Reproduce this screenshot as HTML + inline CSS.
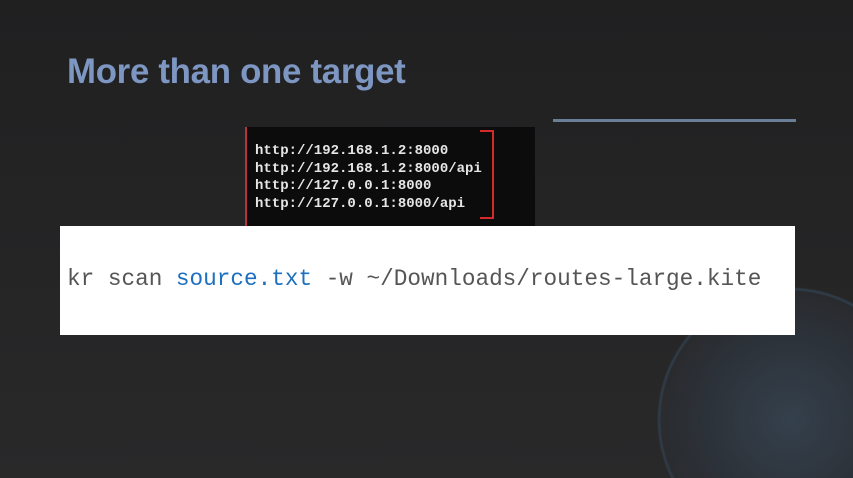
<!DOCTYPE html>
<html><head><style>
html,body{margin:0;width:853px;height:478px;overflow:hidden}
body{background:#262627;position:relative;font-family:"Liberation Sans",sans-serif}
.bg{position:absolute;left:0;top:0;width:853px;height:478px;background:radial-gradient(circle at 790px 420px,#34404c 0,#2c3138 90px,rgba(44,49,56,0.4) 129px,#2f3a45 130px,#2f3a45 131.5px,rgba(38,38,39,0) 133px),linear-gradient(#202021,#29292a)}
h1{position:absolute;left:67px;top:52px;margin:0;font-size:35px;font-weight:bold;color:#7d96c2;letter-spacing:-0.3px;transform:scaleX(0.995);transform-origin:left}
.line{position:absolute;left:553px;top:119px;width:243px;height:3px;background:#6b7e98}
.term{position:absolute;left:245px;top:127px;width:290px;height:99px;background:#0c0c0d;border-left:2px solid #b8323a;box-sizing:border-box}
.term pre{margin:0;position:absolute;left:8px;top:16px;font:bold 14px/17.7px "Liberation Mono",monospace;color:#e6e6e6}
.br{position:absolute;left:480px;top:130px;width:12px;height:85px;border:2px solid #d42a2a;border-left:none}
.cmd{position:absolute;left:60px;top:226px;width:735px;height:109px;background:#fff}
.cmd span.t{position:absolute;left:7px;top:40px;font:22.7px "Liberation Mono",monospace;color:#555;white-space:pre}
.b{color:#1d6fbf}
</style></head><body>
<div class="bg"></div>
<h1>More than one target</h1>
<div class="line"></div>
<div class="term"><pre>http://192.168.1.2:8000
http://192.168.1.2:8000/api
http://127.0.0.1:8000
http://127.0.0.1:8000/api</pre></div>
<div class="br"></div>
<div class="cmd"><span class="t">kr scan <span class="b">source.txt</span> -w ~/Downloads/routes-large.kite</span></div>
</body></html>
